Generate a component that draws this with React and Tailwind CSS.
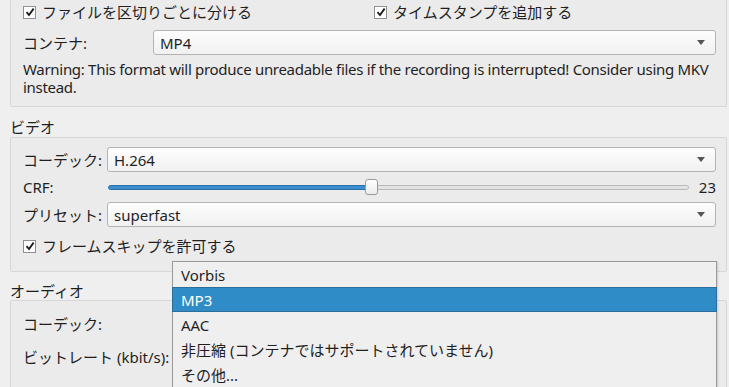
import React from "react";

const font = { fontFamily: '"Noto Sans", "Noto Sans CJK JP", sans-serif' };

const Check = ({ label }) => (
    <div className="flex items-center gap-[6px]">
        <div className="w-[13px] h-[13px] border border-[#8f8f8f] bg-white flex items-center justify-center">
            <svg width="10" height="10" viewBox="0 0 10 10">
                <path d="M1.5 5.2 L4 8 L8.6 1.6" fill="none" stroke="#1a1a1a" strokeWidth="1.8" />
            </svg>
        </div>
        <span>{label}</span>
    </div>
);

const Combo = ({ value, className = "" }) => (
    <div className={`h-[25px] flex items-center justify-between pl-[6px] pr-[10px] rounded-[3px] border border-[#b4b4b4] bg-gradient-to-b from-[#fdfdfd] to-[#f1f1f1] ${className}`}>
        <span>{value}</span>
        <svg width="8" height="5" viewBox="0 0 8 5">
            <path d="M0 0 H8 L4 5 Z" fill="#555" />
        </svg>
    </div>
);

const Group = ({ className = "", children }) => (
    <div className={`ml-[10px] mr-[2px] border border-[#d7d7d7] bg-[#ebebeb] rounded-[2px] ${className}`}>
        {children}
    </div>
);

const menuItems = ["Vorbis", "MP3", "AAC", "非圧縮 (コンテナではサポートされていません)", "その他..."];

const App = () => {
    return (
        <div className="w-[729px] h-[387px] overflow-hidden bg-[#efefef] text-[15px] leading-[18px] text-[#1f1f1f] relative" style={font}>
            <Group className="border-t-0 rounded-t-none pl-[12px] pr-[10px] pb-[10px]">
                <div className="h-[24px] flex items-center">
                    <div className="w-[351px]">
                        <Check label="ファイルを区切りごとに分ける" />
                    </div>
                    <Check label="タイムスタンプを追加する" />
                </div>
                <div className="flex items-center mt-[6px]">
                    <span className="w-[130px]">コンテナ:</span>
                    <Combo value="MP4" className="flex-1" />
                </div>
                <div className="mt-[5px] -mr-[8px] tracking-[-0.3px]">
                    Warning: This format will produce unreadable files if the recording is interrupted! Consider using MKV instead.
                </div>
            </Group>

            <div className="pl-[10px] mt-[11px]">ビデオ</div>
            <Group className="mt-[1px] pl-[12px] pr-[10px] pt-[9px] pb-[16px]">
                <div className="flex items-center">
                    <span className="w-[84px]">コーデック:</span>
                    <Combo value="H.264" className="flex-1" />
                </div>
                <div className="flex items-center h-[30px]">
                    <span className="w-[85px]">CRF:</span>
                    <div className="flex-1 relative h-[16px] flex items-center">
                        <div className="w-[258px] h-[5px] rounded-l-full bg-[#3b8fd1] border border-[#2c6fa6]" />
                        <div className="flex-1 h-[5px] rounded-r-full bg-[#e3e3e3] border border-[#b9b9b9]" />
                        <div className="absolute left-[257px] top-0 w-[13px] h-[16px] rounded-[3px] border border-[#9a9a9a] bg-gradient-to-b from-[#ffffff] to-[#ececec]" />
                    </div>
                    <span className="w-[27px] text-right">23</span>
                </div>
                <div className="flex items-center">
                    <span className="w-[84px]">プリセット:</span>
                    <Combo value="superfast" className="flex-1" />
                </div>
                <div className="mt-[10px]">
                    <Check label="フレームスキップを許可する" />
                </div>
            </Group>

            <div className="pl-[10px] mt-[10px]">オーディオ</div>
            <Group className="pl-[12px] pt-[14px] h-[100px]">
                <div>コーデック:</div>
                <div className="mt-[15px]">ビットレート (kbit/s):</div>
            </Group>

            <div className="absolute left-[172px] top-[261px] w-[545px] h-[140px] bg-[#efefef] border border-[#999] shadow-[1px_1px_2px_rgba(0,0,0,0.15)]">
                {menuItems.map((item) => (
                    <div
                        key={item}
                        className={`h-[25px] flex items-center pl-[8px] ${
                            item === "MP3"
                                ? "bg-[#308cc6] text-white border border-[#2a6e9c] -mx-px"
                                : ""
                        }`}
                    >
                        {item}
                    </div>
                ))}
            </div>
        </div>
    );
};

export default App;
